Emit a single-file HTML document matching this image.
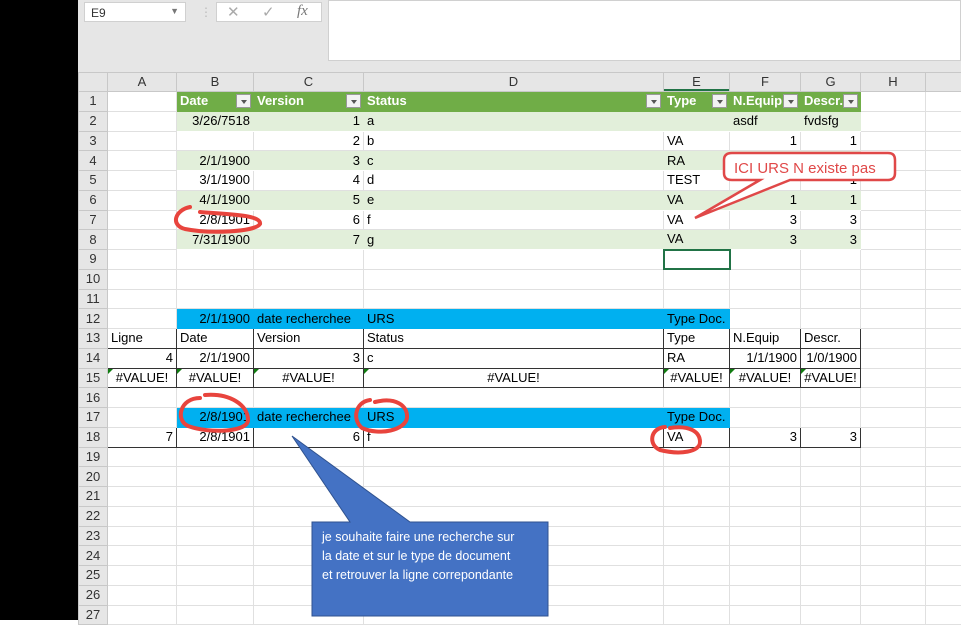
<!DOCTYPE html>
<html><head><meta charset="utf-8"><style>
*{margin:0;padding:0;box-sizing:border-box}
body{width:961px;height:620px;overflow:hidden;background:#fff;font-family:"Liberation Sans",sans-serif;position:relative}
#black{position:absolute;left:0;top:0;width:78px;height:620px;background:#000;z-index:5}
#top{position:absolute;left:78px;top:0;width:883px;height:72px;background:#e6e6e6}
#nb{position:absolute;left:84px;top:2px;width:102px;height:20px;background:#fff;border:1px solid #d0d0d0;font-size:12px;color:#333;padding:3px 6px}
#fx{position:absolute;left:216px;top:2px;width:106px;height:20px;background:#fff;border:1px solid #d0d0d0;font-size:15px;color:#aaa}
#fb{position:absolute;left:328px;top:0;width:633px;height:61px;background:#fff;border:1px solid #d0d0d0}
table{position:absolute;left:78px;top:72px;width:887px;border-collapse:collapse;table-layout:fixed;font-size:13px;color:#000}
td{height:19.75px;border:1px solid #e0e0e0;padding:0 3px;white-space:nowrap;overflow:hidden;line-height:16px}
tr.h td{height:19px;background:#e6e6e6;text-align:center;color:#333;font-size:13px;border-color:#c8c8c8}
td.r{background:#e6e6e6;text-align:center;color:#333;border-color:#c8c8c8}
.g{background:#70ad47;color:#fff;font-weight:bold;border-color:#70ad47;position:relative}
.l{background:#e2efda;border-left-color:#e2efda;border-right-color:#e2efda;border-top-color:#fff;border-bottom-color:#fff}
.b{background:#00b0f0;border-color:#00b0f0}
.k{border:1px solid #333}
.R{text-align:right}.C{text-align:center}
.dd{position:absolute;right:2px;top:2px;width:15px;height:14px;background:#f2f2f2;border:1px solid #999}
.dd:after{content:"";position:absolute;left:4px;top:5px;border:3px solid transparent;border-top:4px solid #555}
.tri{position:relative}
.tri:before{content:"";position:absolute;left:0;top:0;border-top:5px solid #107c10;border-right:5px solid transparent}
</style></head><body>
<div id="black"></div>
<div id="top"></div>
<div id="nb">E9<span style="float:right;color:#777;font-size:9px">▼</span></div>
<div style="position:absolute;left:200px;top:5px;color:#bbb;font-size:12px">⋮</div>
<div id="fx"><span style="position:absolute;left:10px;top:0">✕</span><span style="position:absolute;left:45px;top:0">✓</span><span style="position:absolute;left:80px;top:0;font-family:'Liberation Serif';font-style:italic;color:#777">fx</span></div>
<div id="fb"></div>
<table>
<colgroup><col style="width:29px"><col style="width:69px"><col style="width:77px"><col style="width:110px"><col style="width:300px"><col style="width:66px"><col style="width:71px"><col style="width:60px"><col style="width:65px"><col style="width:40px"></colgroup>
<tr class="h"><td></td><td>A</td><td>B</td><td>C</td><td>D</td><td style="box-shadow:inset 0 -2px 0 #217346">E</td><td>F</td><td>G</td><td>H</td><td></td></tr>
<tr><td class="r">1</td><td></td><td class="g">Date<span class="dd"></span></td><td class="g">Version<span class="dd"></span></td><td class="g">Status<span class="dd"></span></td><td class="g">Type<span class="dd"></span></td><td class="g">N.Equip<span class="dd"></span></td><td class="g">Descr.<span class="dd"></span></td><td></td><td></td></tr>
<tr><td class="r">2</td><td></td><td class="l R">3/26/7518</td><td class="l R">1</td><td class="l">a</td><td class="l"></td><td class="l">asdf</td><td class="l">fvdsfg</td><td></td><td></td></tr>
<tr><td class="r">3</td><td></td><td class="R"></td><td class="R">2</td><td>b</td><td>VA</td><td class="R">1</td><td class="R">1</td><td></td><td></td></tr>
<tr><td class="r">4</td><td></td><td class="l R">2/1/1900</td><td class="l R">3</td><td class="l">c</td><td class="l">RA</td><td class="l"></td><td class="l"></td><td></td><td></td></tr>
<tr><td class="r">5</td><td></td><td class="R">3/1/1900</td><td class="R">4</td><td>d</td><td>TEST</td><td class="R"></td><td class="R">1</td><td></td><td></td></tr>
<tr><td class="r">6</td><td></td><td class="l R">4/1/1900</td><td class="l R">5</td><td class="l">e</td><td class="l">VA</td><td class="l R">1</td><td class="l R">1</td><td></td><td></td></tr>
<tr><td class="r">7</td><td></td><td class="R">2/8/1901</td><td class="R">6</td><td>f</td><td>VA</td><td class="R">3</td><td class="R">3</td><td></td><td></td></tr>
<tr><td class="r">8</td><td></td><td class="l R">7/31/1900</td><td class="l R">7</td><td class="l">g</td><td class="l">VA</td><td class="l R">3</td><td class="l R">3</td><td></td><td></td></tr>
<tr><td class="r">9</td><td></td><td></td><td></td><td></td><td style="border:2px solid #217346"></td><td></td><td></td><td></td><td></td></tr>
<tr><td class="r">10</td><td></td><td></td><td></td><td></td><td></td><td></td><td></td><td></td><td></td></tr>
<tr><td class="r">11</td><td></td><td></td><td></td><td></td><td></td><td></td><td></td><td></td><td></td></tr>
<tr><td class="r">12</td><td></td><td class="b R">2/1/1900</td><td class="b">date recherchee</td><td class="b">URS</td><td class="b">Type Doc.</td><td></td><td></td><td></td><td></td></tr>
<tr><td class="r">13</td><td class="k">Ligne</td><td class="k">Date</td><td class="k">Version</td><td class="k">Status</td><td class="k">Type</td><td class="k">N.Equip</td><td class="k">Descr.</td><td></td><td></td></tr>
<tr><td class="r">14</td><td class="k R">4</td><td class="k R">2/1/1900</td><td class="k R">3</td><td class="k">c</td><td class="k">RA</td><td class="k R">1/1/1900</td><td class="k R">1/0/1900</td><td></td><td></td></tr>
<tr><td class="r">15</td><td class="k C tri">#VALUE!</td><td class="k C tri">#VALUE!</td><td class="k C tri">#VALUE!</td><td class="k C tri">#VALUE!</td><td class="k C tri">#VALUE!</td><td class="k C tri">#VALUE!</td><td class="k C tri">#VALUE!</td><td></td><td></td></tr>
<tr><td class="r">16</td><td></td><td></td><td></td><td></td><td></td><td></td><td></td><td></td><td></td></tr>
<tr><td class="r">17</td><td></td><td class="b R">2/8/1901</td><td class="b">date recherchee</td><td class="b">URS</td><td class="b">Type Doc.</td><td></td><td></td><td></td><td></td></tr>
<tr><td class="r">18</td><td class="k R">7</td><td class="k R">2/8/1901</td><td class="k R">6</td><td class="k">f</td><td class="k">VA</td><td class="k R">3</td><td class="k R">3</td><td></td><td></td></tr>
<tr><td class="r">19</td><td></td><td></td><td></td><td></td><td></td><td></td><td></td><td></td><td></td></tr>
<tr><td class="r">20</td><td></td><td></td><td></td><td></td><td></td><td></td><td></td><td></td><td></td></tr>
<tr><td class="r">21</td><td></td><td></td><td></td><td></td><td></td><td></td><td></td><td></td><td></td></tr>
<tr><td class="r">22</td><td></td><td></td><td></td><td></td><td></td><td></td><td></td><td></td><td></td></tr>
<tr><td class="r">23</td><td></td><td></td><td></td><td></td><td></td><td></td><td></td><td></td><td></td></tr>
<tr><td class="r">24</td><td></td><td></td><td></td><td></td><td></td><td></td><td></td><td></td><td></td></tr>
<tr><td class="r">25</td><td></td><td></td><td></td><td></td><td></td><td></td><td></td><td></td><td></td></tr>
<tr><td class="r">26</td><td></td><td></td><td></td><td></td><td></td><td></td><td></td><td></td><td></td></tr>
<tr><td class="r">27</td><td></td><td></td><td></td><td></td><td></td><td></td><td></td><td></td><td></td></tr>
</table>
<svg style="position:absolute;left:0;top:0" width="961" height="620">
<path d="M732,153 H888 Q895,153 895,160 V173 Q895,180 888,180 H790 L695,218 L760,180 H732 Q724,180 724,173 V160 Q724,153 732,153 Z" fill="#fff" stroke="#e04848" stroke-width="2.5"/>
<text x="734" y="173" font-family="Liberation Sans" font-size="15" fill="#e04848">ICI URS N existe pas</text>
<path d="M312,522 H350 L292,436 L410,522 H548 V616 H312 Z" fill="#4472c4" stroke="#2f528f" stroke-width="1"/>
<text font-family="Liberation Sans" font-size="12.5" fill="#fff"><tspan x="322" y="541">je souhaite faire une recherche sur</tspan><tspan x="322" y="560">la date et sur le type de document</tspan><tspan x="322" y="579">et retrouver la ligne correpondante</tspan></text>
<g fill="none" stroke="#e8443d" stroke-width="4" stroke-linecap="round">
<path d="M190,207 C175,210 170,225 185,229 C210,234 255,232 260,224 C262,214 220,214 200,212"/>
<path d="M200,398 C180,398 175,420 188,426 C210,434 248,432 248,420 C248,405 230,393 205,395"/>
<path d="M370,400 C355,402 352,420 362,428 C380,436 405,430 407,418 C408,405 395,397 375,402"/>
<path d="M665,427 C650,428 648,445 660,450 C680,455 700,452 700,442 C700,432 690,425 670,428"/>
</g>
</svg>
</body></html>
